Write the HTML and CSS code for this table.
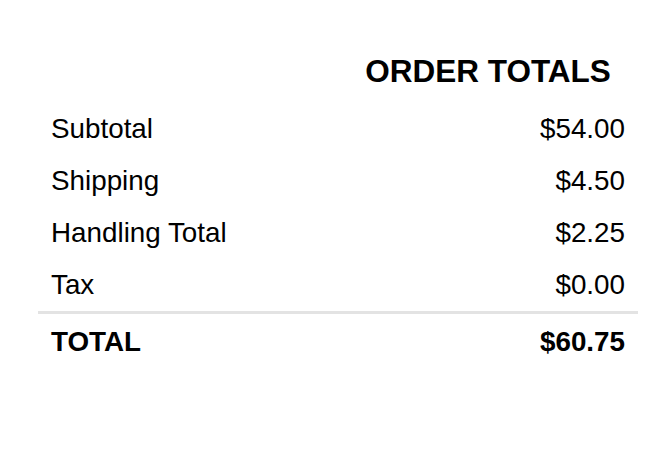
FILE: index.html
```html
<!DOCTYPE html>
<html>
<head lang="en">
    <meta charset="UTF-8">
    <title>Order Totals</title>
    <link rel="stylesheet" href="styles.css">
</head>
<body>
    <div id="totals">
        <div class="head">
            <span class="spacer"></span>
            <h2>ORDER TOTALS</h2>
        </div>
        <div class="row">
            <span>Subtotal</span>
            <span>$54.00</span>
        </div>
        <div class="row">
            <span>Shipping</span>
            <span>$4.50</span>
        </div>
        <div class="row">
            <span>Handling Total</span>
            <span>$2.25</span>
        </div>
        <div class="row">
            <span>Tax</span>
            <span>$0.00</span>
        </div>
        <div class="row grand">
            <span>TOTAL</span>
            <span>$60.75</span>
        </div>
    </div>
</body>
</html>
```

FILE: styles.css
```css
*{
    margin: 0;
    padding: 0;
}
body{
    background: #fff;
    color: #000;
    font-family: "Liberation Sans", Arial, sans-serif;
}
#totals{
    width: 600px;
    margin: 53px 0 0 38px;
}
.head{
    display: flex;
    padding-bottom: 14px;
}
.head .spacer,
.head h2{
    flex: 1;
}
.head h2{
    text-align: center;
    font-size: 31.5px;
    line-height: 36px;
    font-weight: bold;
}
.row{
    display: flex;
    justify-content: space-between;
    padding: 10px 13px 10px 13px;
    font-size: 27.8px;
    line-height: 32px;
}
.grand{
    border-top: 3px solid #e3e3e3;
    padding-top: 12px;
    font-weight: bold;
}
```
